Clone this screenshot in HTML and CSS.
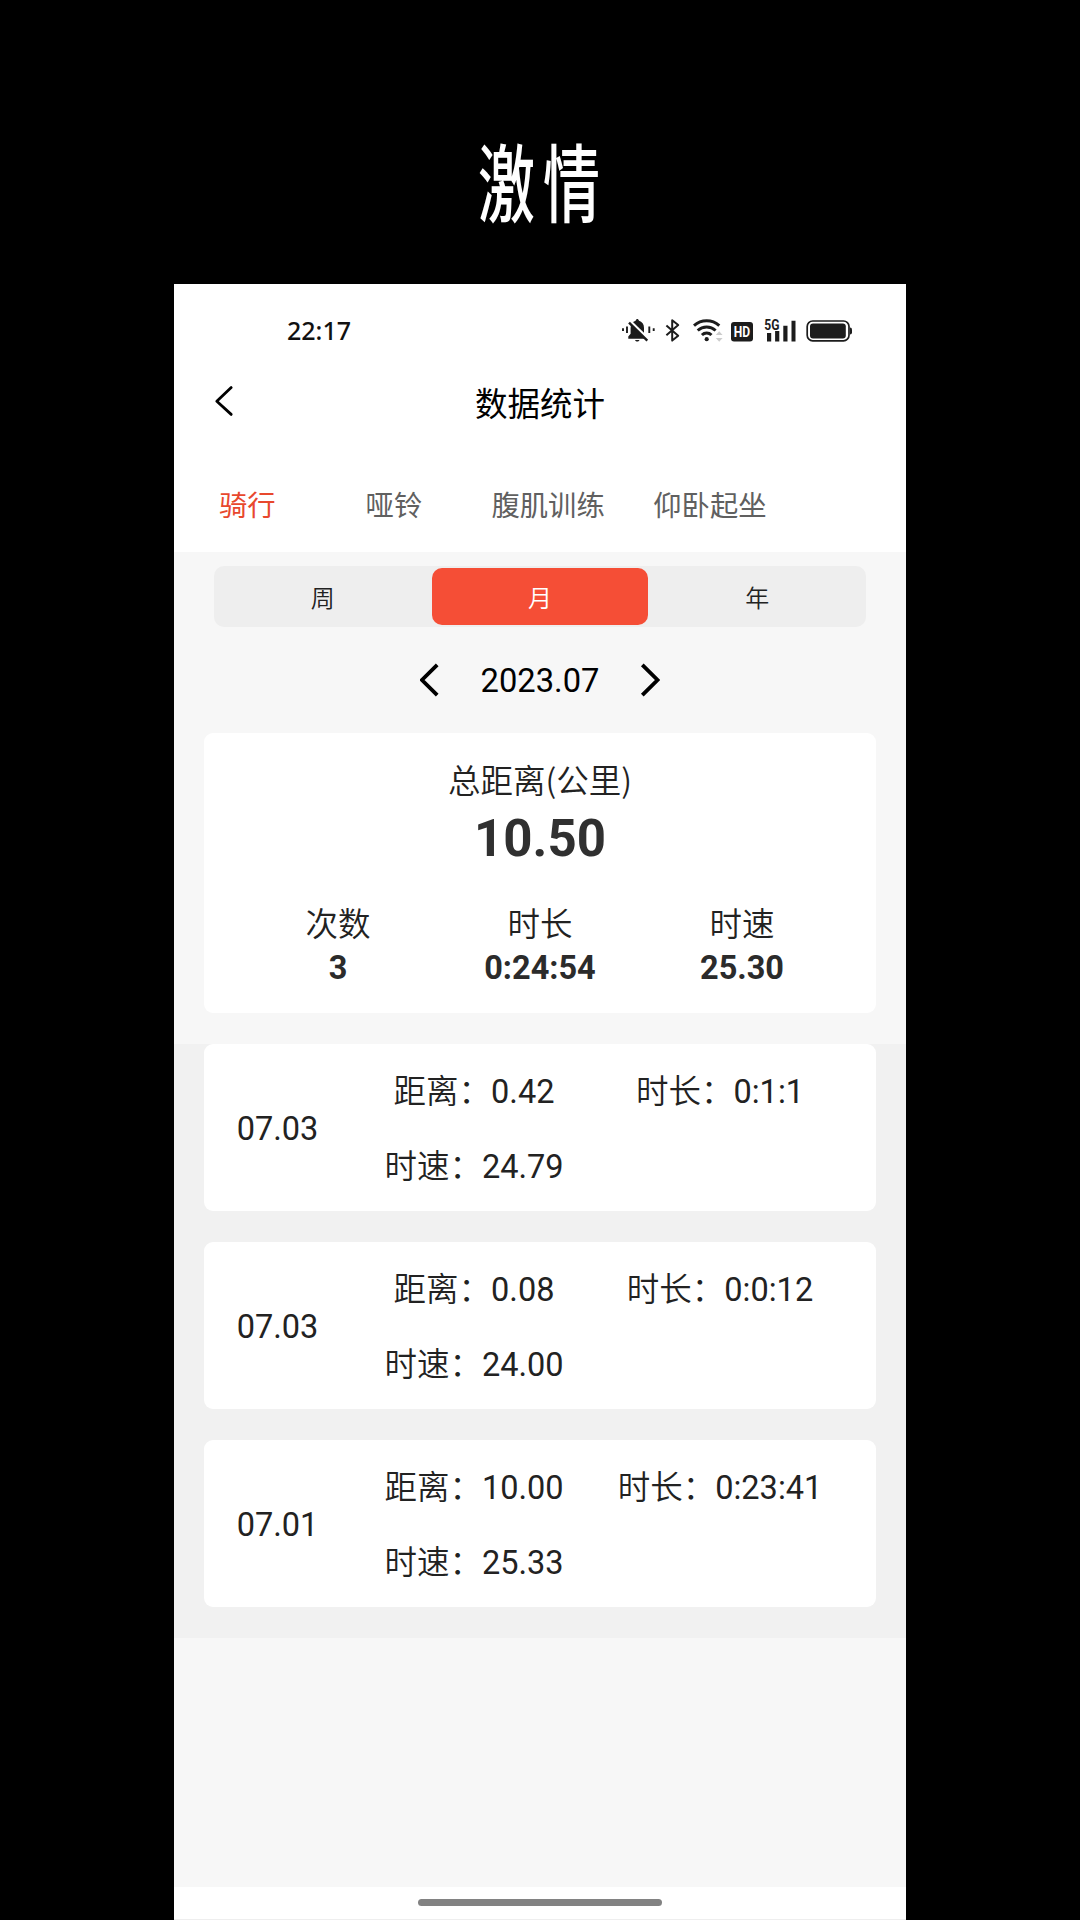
FILE: index.html
```html
<!DOCTYPE html>
<html lang="zh-CN">
<head>
<meta charset="utf-8">
<title>数据统计</title>
<link rel="stylesheet" href="styles.css">
</head>
<body>
<h1 class="slogan"><span class="slogan-text">激情</span></h1>
<main class="phone">
  <div class="status">
    <span class="clock">22:17</span>
    <div class="status-icons">
      <svg class="icon-bell" width="33" height="24" viewBox="0 0 33 24">
        <path d="M6.300 20.800v-2.300l2.300-2.700V10c0-4 2-6.300 5-7.300C14 1.500 14.600 1 15.300 1S16.600 1.500 17 2.700c3 1 5 3.300 5 7.300v5.800l2.300 2.700v2.300zM13 22h4.500c-1 2-3.500 2-4.500 0z"/>
        <path d="M8.500 3.500l18 17.500" stroke="#fff" stroke-width="2.500"/>
        <path d="M7 4.700l18.300 18" stroke="#1c1c1c" stroke-width="2.400"/>
        <path d="M5 8.500v6.500M27.300 8.500v6.500M1 10.300v2.800M31.700 10.300v2.800" stroke="#1c1c1c" stroke-width="1.900"/>
      </svg>
      <svg class="icon-bluetooth" width="15" height="24" viewBox="0 0 15 24">
        <path d="M1.400 7.500L13.200 17.700 7.200 22.600V2.200L13.200 7.100 1.400 17.300" fill="none" stroke="#1c1c1c" stroke-width="2" stroke-linejoin="round"/>
      </svg>
      <svg class="icon-wifi" width="30" height="24" viewBox="0 0 30 24">
        <g fill="none" stroke="#1c1c1c" stroke-width="3"><path d="M1 7.600c7.300-6.500 18-6.500 25.300 0M4.700 12.500c5.200-4.700 12.700-4.700 17.900 0M8.900 17c2.700-2.600 6.900-2.600 9.600 0"/></g>
        <circle cx="13.700" cy="21.200" r="2.100"/>
        <path d="M22.800 17l3.400-3.800 3.400 3.800zM22.800 20l3.400 3.800 3.400-3.800z" fill="#ccc"/>
      </svg>
      <svg class="icon-hd" width="22" height="24" viewBox="0 0 22 24">
        <rect y="4" width="22" height="19.500" rx="3"/>
        <text x="2.800" y="19" font-size="15" textLength="16.400" lengthAdjust="spacingAndGlyphs" fill="#fff">HD</text>
      </svg>
      <svg class="icon-signal" width="32" height="24" viewBox="0 0 32 24">
        <text x=".2" y="11.600" font-size="14" textLength="15.200" lengthAdjust="spacingAndGlyphs">5G</text>
        <path d="M3 15h4.200v8.400H3zM11.100 13h4.200v10.400h-4.200zM19.300 7.700h4.200v15.700h-4.200zM27.500 2.700h4v20.700h-4z"/>
      </svg>
      <svg class="icon-battery" width="46" height="24" viewBox="0 0 46 24">
        <rect x="1.200" y="3" width="41.800" height="19.800" rx="5.500" fill="none" stroke="#1c1c1c" stroke-width="1.700"/>
        <rect x="4" y="5.500" width="35.800" height="14.900" rx="3"/>
        <path d="M44 9.600q2 0 2 2v3q0 2-2 2z"/>
      </svg>
    </div>
  </div>
  <header class="navbar">
    <svg class="back" width="20" height="32" viewBox="0 0 20 32"><path d="M17.200 2.600L2.800 16.300 17.200 29.400"/></svg>
    <h2 class="page-title">数据统计</h2>
  </header>
  <nav class="tabs">
    <span class="tab tab-active">骑行</span>
    <span class="tab">哑铃</span>
    <span class="tab">腹肌训练</span>
    <span class="tab">仰卧起坐</span>
  </nav>
  <div class="segments">
    <span class="segment">周</span>
    <span class="segment segment-active">月</span>
    <span class="segment">年</span>
  </div>
  <div class="period">
    <svg class="arrow" width="20" height="34" viewBox="0 0 20 34"><path d="M17.200 1.800L2 17 17.200 32.200"/></svg>
    <span class="period-value">2023.07</span>
    <svg class="arrow" width="20" height="34" viewBox="0 0 20 34"><path d="M2.300 1.800L17.500 17 2.300 32.200"/></svg>
  </div>
  <section class="summary">
    <div class="label">总距离(公里)</div>
    <div class="total">10.50</div>
    <div class="stats">
      <div class="stat"><div class="label">次数</div><div class="value">3</div></div>
      <div class="stat"><div class="label">时长</div><div class="value">0:24:54</div></div>
      <div class="stat"><div class="label">时速</div><div class="value">25.30</div></div>
    </div>
  </section>
  <section class="records">
    <article class="record">
      <div class="date">07.03</div>
      <div class="details">
        <div><span class="key">距离：</span>0.42</div>
        <div><span class="key">时长：</span>0:1:1</div>
        <div><span class="key">时速：</span>24.79</div>
      </div>
    </article>
    <article class="record">
      <div class="date">07.03</div>
      <div class="details">
        <div><span class="key">距离：</span>0.08</div>
        <div><span class="key">时长：</span>0:0:12</div>
        <div><span class="key">时速：</span>24.00</div>
      </div>
    </article>
    <article class="record">
      <div class="date">07.01</div>
      <div class="details">
        <div><span class="key">距离：</span>10.00</div>
        <div><span class="key">时长：</span>0:23:41</div>
        <div><span class="key">时速：</span>25.33</div>
      </div>
    </article>
  </section>
  <footer class="gesture"><div class="gesture-bar"></div></footer>
</main>
</body>
</html>
```
FILE: styles.css
```css
* { box-sizing: border-box; }
body {
  margin: 0;
  height: 1920px;
  overflow: hidden;
  background: #000;
  display: flex;
  flex-direction: column;
  align-items: center;
  font-family: Roboto, "Noto Sans CJK SC", sans-serif;
  color: #222;
}
.slogan {
  margin: 0;
  height: 284px;
  padding-top: 137px;
  line-height: 85px;
  font-family: "Noto Sans CJK SC", sans-serif;
  font-size: 57px;
  font-weight: 500;
  letter-spacing: 8px;
  color: #fff;
}
.slogan-text { display: inline-block; transform: scaleY(1.5); margin-right: -6px; }
.phone {
  width: 732px;
  height: 1636px;
  background: #f7f7f7;
  display: flex;
  flex-direction: column;
}
.status {
  height: 78px;
  padding: 16px 54px 0 113px;
  display: flex;
  justify-content: space-between;
  align-items: center;
  background: #fff;
}
.clock { font-family: "Noto Sans", sans-serif; font-size: 25px; font-weight: 500; color: #111; margin-top: -2px; }
.status-icons { display: flex; fill: #1c1c1c; font-weight: 700; margin-top: -2px; }
.status-icons svg { overflow: visible; }
.icon-bluetooth { margin-left: 10px; }
.icon-wifi { margin-left: 13px; }
.icon-hd { margin-left: 8px; }
.icon-signal { margin-left: 11px; }
.icon-battery { margin-left: 10px; }
.navbar {
  height: 80px;
  padding: 0 40px 2px;
  display: grid;
  grid-template-columns: 20px 1fr 20px;
  align-items: center;
  background: #fff;
}
.back, .arrow { fill: none; stroke: #000; stroke-width: 3; }
.back { stroke-linecap: round; stroke-linejoin: round; stroke-width: 2.800; }
.arrow { stroke-width: 3.800; }
.page-title { margin: 0; text-align: center; font-size: 32.500px; font-weight: 400; color: #000; }
.tabs { height: 110px; display: flex; background: #fff; line-height: 129px; }
.tab { padding: 0 24.300px; min-width: 146.600px; text-align: center; font-size: 28.300px; color: #606060; font-weight: 400; }
.tab-active { color: #e8482d; }
.segments {
  margin: 14px 40px 0;
  height: 61px;
  padding: 2px 0;
  display: grid;
  grid-template-columns: repeat(3, 1fr);
  background: #eee;
  border-radius: 10px;
  line-height: 62px;
  font-size: 24px;
  font-weight: 350;
  text-align: center;
}
.segment { margin: 0 1px; height: 57px; }
.segment-active { background: #f54e36; color: #fff; border-radius: 10px; }
.period {
  height: 106px;
  display: flex;
  justify-content: center;
  align-items: center;
  gap: 41px;
  font-size: 32.700px;
  color: #000;
}
.period-value { padding-top: 2px; }
.summary {
  margin: 0 30px;
  height: 280px;
  padding-top: 26px;
  background: #fff;
  border-radius: 9px;
  text-align: center;
}
.label { font-family: "Noto Sans CJK SC", sans-serif; font-size: 32.500px; font-weight: 350; line-height: 40px; }
.total { font-size: 51px; font-weight: 700; line-height: 80px; color: #303030; }
.stats { display: grid; grid-template-columns: repeat(3, 202px); justify-content: center; margin-top: 23px; }
.value { font-size: 32.500px; font-weight: 700; line-height: 53px; color: #2b2b2b; }
.records {
  margin-top: 31px;
  height: 594px;
  padding: 0 30px;
  display: flex;
  flex-direction: column;
  gap: 31px;
  background: #f1f1f1;
}
.record {
  height: 167px;
  display: flex;
  align-items: center;
  background: #fff;
  border-radius: 9px;
  font-size: 32.500px;
  text-align: center;
}
.date { width: 147px; padding-top: 3px; }
.details { display: grid; grid-template-columns: 246px 246px; grid-auto-rows: 74.500px; line-height: 74px; padding-top: 4px; }
.key { font-weight: 350; }
.gesture {
  margin-top: auto;
  height: 33px;
  padding-top: 12px;
  background: #fff;
  border-bottom: 1px solid #eee;
}
.gesture-bar { width: 244px; height: 7px; margin: 0 auto; border-radius: 4px; background: #828282; }
```
